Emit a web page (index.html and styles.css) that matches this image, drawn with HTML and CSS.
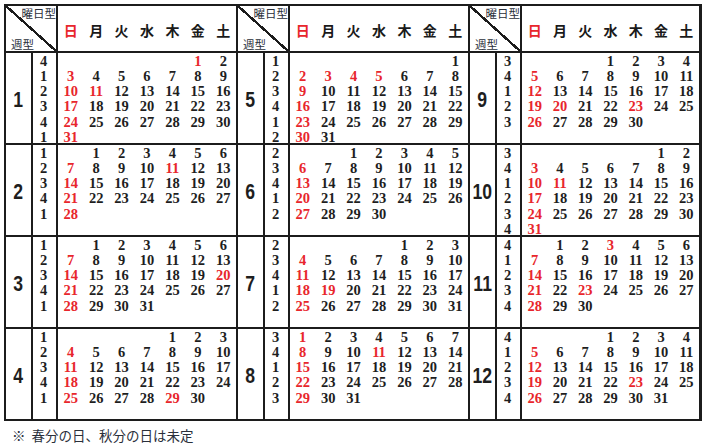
FILE: index.html
```
<!DOCTYPE html>
<html lang="ja">
<head>
<meta charset="utf-8">
<title>曜日型・週型カレンダー</title>
<link rel="stylesheet" href="styles.css">
</head>
<body>
<div class="cal">
  <div class="corner"><span class="c-top">曜日型</span><span class="c-bot">週型</span></div>
  <div class="dow"><span class="h">日</span><span>月</span><span>火</span><span>水</span><span>木</span><span>金</span><span>土</span></div>
  <div class="corner"><span class="c-top">曜日型</span><span class="c-bot">週型</span></div>
  <div class="dow"><span class="h">日</span><span>月</span><span>火</span><span>水</span><span>木</span><span>金</span><span>土</span></div>
  <div class="corner"><span class="c-top">曜日型</span><span class="c-bot">週型</span></div>
  <div class="dow"><span class="h">日</span><span>月</span><span>火</span><span>水</span><span>木</span><span>金</span><span>土</span></div>

  <!-- row 1 -->
  <div class="mon"><span>1</span></div>
  <div class="wk">4<br>1<br>2<br>3<br>4<br>1</div>
  <div class="days">
    <span class="h c6">1</span><span>2</span>
    <span class="h">3</span><span>4</span><span>5</span><span>6</span><span>7</span><span>8</span><span>9</span>
    <span class="h">10</span><span class="h">11</span><span>12</span><span>13</span><span>14</span><span>15</span><span>16</span>
    <span class="h">17</span><span>18</span><span>19</span><span>20</span><span>21</span><span>22</span><span>23</span>
    <span class="h">24</span><span>25</span><span>26</span><span>27</span><span>28</span><span>29</span><span>30</span>
    <span class="h">31</span>
  </div>
  <div class="mon"><span>5</span></div>
  <div class="wk">1<br>2<br>3<br>4<br>1<br>2</div>
  <div class="days">
    <span class="c7">1</span>
    <span class="h">2</span><span class="h">3</span><span class="h">4</span><span class="h">5</span><span>6</span><span>7</span><span>8</span>
    <span class="h">9</span><span>10</span><span>11</span><span>12</span><span>13</span><span>14</span><span>15</span>
    <span class="h">16</span><span>17</span><span>18</span><span>19</span><span>20</span><span>21</span><span>22</span>
    <span class="h">23</span><span>24</span><span>25</span><span>26</span><span>27</span><span>28</span><span>29</span>
    <span class="h">30</span><span>31</span>
  </div>
  <div class="mon"><span>9</span></div>
  <div class="wk">3<br>4<br>1<br>2<br>3</div>
  <div class="days">
    <span class="c4">1</span><span>2</span><span>3</span><span>4</span>
    <span class="h">5</span><span>6</span><span>7</span><span>8</span><span>9</span><span>10</span><span>11</span>
    <span class="h">12</span><span>13</span><span>14</span><span>15</span><span>16</span><span>17</span><span>18</span>
    <span class="h">19</span><span class="h">20</span><span>21</span><span>22</span><span class="h">23</span><span>24</span><span>25</span>
    <span class="h">26</span><span>27</span><span>28</span><span>29</span><span>30</span>
  </div>

  <!-- row 2 -->
  <div class="mon"><span>2</span></div>
  <div class="wk">1<br>2<br>3<br>4<br>1</div>
  <div class="days">
    <span class="c2">1</span><span>2</span><span>3</span><span>4</span><span>5</span><span>6</span>
    <span class="h">7</span><span>8</span><span>9</span><span>10</span><span class="h">11</span><span>12</span><span>13</span>
    <span class="h">14</span><span>15</span><span>16</span><span>17</span><span>18</span><span>19</span><span>20</span>
    <span class="h">21</span><span>22</span><span>23</span><span>24</span><span>25</span><span>26</span><span>27</span>
    <span class="h">28</span>
  </div>
  <div class="mon"><span>6</span></div>
  <div class="wk">2<br>3<br>4<br>1<br>2</div>
  <div class="days">
    <span class="c3">1</span><span>2</span><span>3</span><span>4</span><span>5</span>
    <span class="h">6</span><span>7</span><span>8</span><span>9</span><span>10</span><span>11</span><span>12</span>
    <span class="h">13</span><span>14</span><span>15</span><span>16</span><span>17</span><span>18</span><span>19</span>
    <span class="h">20</span><span>21</span><span>22</span><span>23</span><span>24</span><span>25</span><span>26</span>
    <span class="h">27</span><span>28</span><span>29</span><span>30</span>
  </div>
  <div class="mon"><span>10</span></div>
  <div class="wk">3<br>4<br>1<br>2<br>3<br>4</div>
  <div class="days">
    <span class="c6">1</span><span>2</span>
    <span class="h">3</span><span>4</span><span>5</span><span>6</span><span>7</span><span>8</span><span>9</span>
    <span class="h">10</span><span class="h">11</span><span>12</span><span>13</span><span>14</span><span>15</span><span>16</span>
    <span class="h">17</span><span>18</span><span>19</span><span>20</span><span>21</span><span>22</span><span>23</span>
    <span class="h">24</span><span>25</span><span>26</span><span>27</span><span>28</span><span>29</span><span>30</span>
    <span class="h">31</span>
  </div>

  <!-- row 3 -->
  <div class="mon"><span>3</span></div>
  <div class="wk">1<br>2<br>3<br>4<br>1</div>
  <div class="days">
    <span class="c2">1</span><span>2</span><span>3</span><span>4</span><span>5</span><span>6</span>
    <span class="h">7</span><span>8</span><span>9</span><span>10</span><span>11</span><span>12</span><span>13</span>
    <span class="h">14</span><span>15</span><span>16</span><span>17</span><span>18</span><span>19</span><span class="h">20</span>
    <span class="h">21</span><span>22</span><span>23</span><span>24</span><span>25</span><span>26</span><span>27</span>
    <span class="h">28</span><span>29</span><span>30</span><span>31</span>
  </div>
  <div class="mon"><span>7</span></div>
  <div class="wk">2<br>3<br>4<br>1<br>2</div>
  <div class="days">
    <span class="c5">1</span><span>2</span><span>3</span>
    <span class="h">4</span><span>5</span><span>6</span><span>7</span><span>8</span><span>9</span><span>10</span>
    <span class="h">11</span><span>12</span><span>13</span><span>14</span><span>15</span><span>16</span><span>17</span>
    <span class="h">18</span><span class="h">19</span><span>20</span><span>21</span><span>22</span><span>23</span><span>24</span>
    <span class="h">25</span><span>26</span><span>27</span><span>28</span><span>29</span><span>30</span><span>31</span>
  </div>
  <div class="mon"><span>11</span></div>
  <div class="wk">4<br>1<br>2<br>3<br>4</div>
  <div class="days">
    <span class="c2">1</span><span>2</span><span class="h">3</span><span>4</span><span>5</span><span>6</span>
    <span class="h">7</span><span>8</span><span>9</span><span>10</span><span>11</span><span>12</span><span>13</span>
    <span class="h">14</span><span>15</span><span>16</span><span>17</span><span>18</span><span>19</span><span>20</span>
    <span class="h">21</span><span>22</span><span class="h">23</span><span>24</span><span>25</span><span>26</span><span>27</span>
    <span class="h">28</span><span>29</span><span>30</span>
  </div>

  <!-- row 4 -->
  <div class="mon"><span>4</span></div>
  <div class="wk">1<br>2<br>3<br>4<br>1</div>
  <div class="days">
    <span class="c5">1</span><span>2</span><span>3</span>
    <span class="h">4</span><span>5</span><span>6</span><span>7</span><span>8</span><span>9</span><span>10</span>
    <span class="h">11</span><span>12</span><span>13</span><span>14</span><span>15</span><span>16</span><span>17</span>
    <span class="h">18</span><span>19</span><span>20</span><span>21</span><span>22</span><span>23</span><span>24</span>
    <span class="h">25</span><span>26</span><span>27</span><span>28</span><span class="h">29</span><span>30</span>
  </div>
  <div class="mon"><span>8</span></div>
  <div class="wk">3<br>4<br>1<br>2<br>3</div>
  <div class="days">
    <span class="h">1</span><span>2</span><span>3</span><span>4</span><span>5</span><span>6</span><span>7</span>
    <span class="h">8</span><span>9</span><span>10</span><span class="h">11</span><span>12</span><span>13</span><span>14</span>
    <span class="h">15</span><span>16</span><span>17</span><span>18</span><span>19</span><span>20</span><span>21</span>
    <span class="h">22</span><span>23</span><span>24</span><span>25</span><span>26</span><span>27</span><span>28</span>
    <span class="h">29</span><span>30</span><span>31</span>
  </div>
  <div class="mon"><span>12</span></div>
  <div class="wk">4<br>1<br>2<br>3<br>4</div>
  <div class="days">
    <span class="c4">1</span><span>2</span><span>3</span><span>4</span>
    <span class="h">5</span><span>6</span><span>7</span><span>8</span><span>9</span><span>10</span><span>11</span>
    <span class="h">12</span><span>13</span><span>14</span><span>15</span><span>16</span><span>17</span><span>18</span>
    <span class="h">19</span><span>20</span><span>21</span><span>22</span><span class="h">23</span><span>24</span><span>25</span>
    <span class="h">26</span><span>27</span><span>28</span><span>29</span><span>30</span><span>31</span>
  </div>
</div>
<p class="note">※ 春分の日、秋分の日は未定</p>
</body>
</html>
```
FILE: styles.css
```
html, body {
  margin: 0;
  padding: 0;
  background: #ffffff;
}

body {
  font-family: "Liberation Serif", "Noto Sans CJK JP", serif;
  color: #1e1e1e;
}

.cal {
  margin: 4px 0 0 4px;
  width: 698px;
  box-sizing: border-box;
  display: grid;
  grid-template-columns: 25px 23px 178px 25px 23px 178px 25px 23px 177px;
  grid-template-rows: 45px repeat(4, 90px);
  gap: 2px;
  padding: 2px;
  background: #1c1c1c;
}

.cal > div {
  background: #ffffff;
}

/* header corner with diagonal */
.cal > .corner {
  grid-column: span 2;
  display: flex;
  flex-direction: column;
  justify-content: space-between;
  background:
    linear-gradient(to top right,
      #ffffff calc(50% - 1.2px),
      #1c1c1c calc(50% - 1.2px),
      #1c1c1c calc(50% + 1.2px),
      #ffffff calc(50% + 1.2px));
  font-family: "Noto Sans CJK JP", sans-serif;
  font-size: 11.5px;
  line-height: 14px;
  color: #2a2f3a;
}

.c-top {
  align-self: flex-end;
}

.c-bot {
  align-self: flex-start;
  margin-left: 5px;
}

/* day of week header */
.dow {
  display: grid;
  grid-template-columns: repeat(7, 1fr);
  align-items: center;
  padding-top: 3px;
  font-family: "Noto Sans CJK JP", sans-serif;
  font-weight: 700;
  font-size: 14px;
  text-align: center;
  color: #1a1a1a;
}

.h {
  color: #e8262c;
}

/* month number */
.mon {
  display: flex;
  align-items: center;
  justify-content: center;
  padding-top: 4px;
  box-sizing: border-box;
  font-family: "Liberation Sans", sans-serif;
  font-weight: 700;
  font-size: 22px;
  color: #1e1e1e;
}

.mon span {
  display: inline-block;
  transform: scaleX(0.8);
}

/* week column */
.wk {
  text-align: center;
  font-weight: 700;
  font-size: 14.5px;
  line-height: 15.3px;
  padding-top: 0.5px;
  padding-right: 2px;
}

/* days grid */
.days {
  display: grid;
  grid-template-columns: repeat(7, 1fr);
  grid-auto-rows: 15.3px;
  align-content: start;
  padding-top: 0.5px;
  font-weight: 700;
  font-size: 14.5px;
  line-height: 15.3px;
  text-align: center;
}

.c2 { grid-column-start: 2; }
.c3 { grid-column-start: 3; }
.c4 { grid-column-start: 4; }
.c5 { grid-column-start: 5; }
.c6 { grid-column-start: 6; }
.c7 { grid-column-start: 7; }

.note {
  margin: 6px 0 0 12px;
  font-family: "Noto Sans CJK JP", sans-serif;
  font-size: 13.5px;
  line-height: 16px;
  color: #2a2f3a;
  word-spacing: 3px;
}
```
